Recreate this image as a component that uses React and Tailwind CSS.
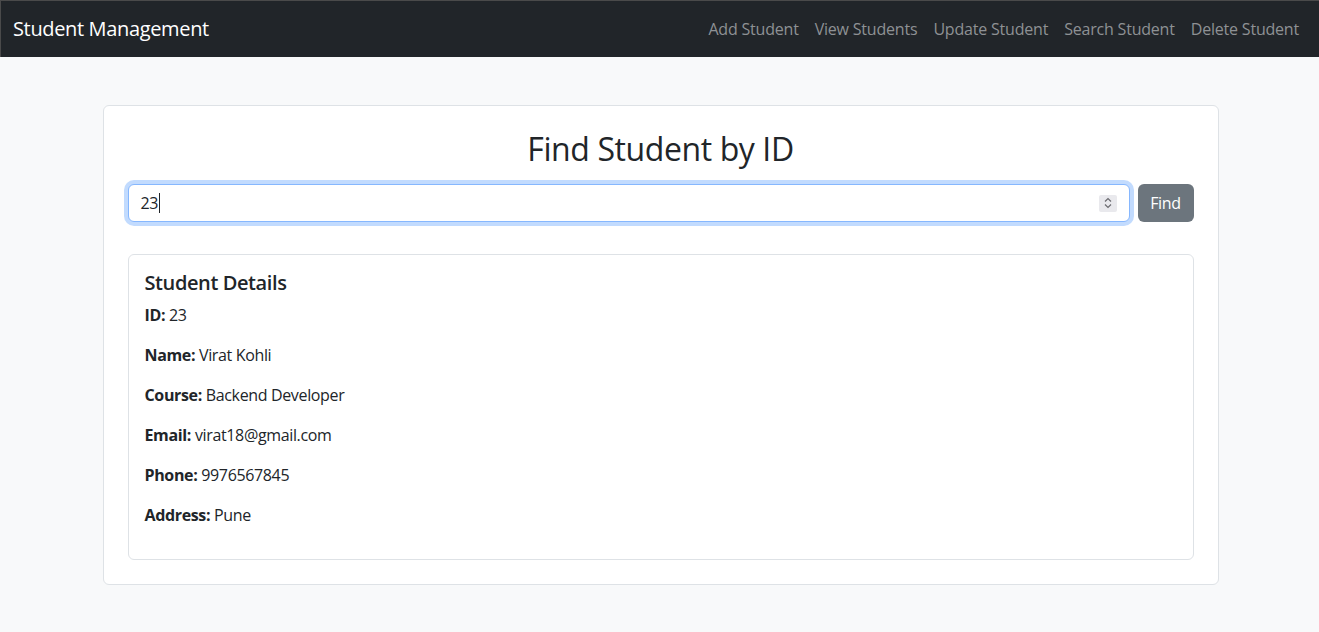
import React from 'react';

const navLinks = ['Add Student', 'View Students', 'Update Student', 'Search Student', 'Delete Student'];

const student = [
  ['ID', '23'],
  ['Name', 'Virat Kohli'],
  ['Course', 'Backend Developer'],
  ['Email', 'virat18@gmail.com'],
  ['Phone', '9976567845'],
  ['Address', 'Pune'],
];

const Spinner = () => (
  <div className="w-[18px] h-[17px] bg-[#e9e9ed] rounded-[2px] flex flex-col items-center justify-center">
    <svg width="10" height="14" viewBox="0 0 10 14" fill="none" stroke="#6b6b70" strokeWidth="1.2">
      <path d="M2 5.5 L5 2.5 L8 5.5" />
      <path d="M2 8.5 L5 11.5 L8 8.5" />
    </svg>
  </div>
);

const App = () => {
  return (
    <div className="min-h-[632px] bg-[#f8f9fa] text-[#212529] font-['Open_Sans',sans-serif]">
      <nav className="h-[57px] bg-[#212529] border-t border-l border-[#4a4a4a] flex items-center justify-between px-3">
        <span className="text-[20px] leading-[30px] text-white tracking-[-0.35px]">Student Management</span>
        <div className="flex items-center">
          {navLinks.map((link) => (
            <span key={link} className="px-2 text-[16px] leading-[24px] text-[#8e9194] tracking-[-0.2px]">
              {link}
            </span>
          ))}
        </div>
      </nav>

      <div className="mx-auto w-[1118px] pl-[2px] pt-[48px]">
        <div className="bg-white border border-[#dee2e6] rounded-[6px] p-6">
          <h2 className="text-center text-[32px] leading-[38px] font-normal tracking-[-0.4px] mb-4">Find Student by ID</h2>

          <div className="flex gap-2">
            <div className="flex-1 h-[38px] flex items-center px-3 bg-white border border-[#86b7fe] rounded-[6px] shadow-[0_0_0_4px_rgba(13,110,253,0.25)]">
              <span className="text-[16px] leading-[24px] tracking-[-0.3px]">23</span>
              <span className="w-px h-[20px] bg-[#212529] ml-[1px]" />
              <div className="flex-1" />
              <Spinner />
            </div>
            <button className="h-[38px] w-[56px] bg-[#6c757d] text-white text-[16px] rounded-[6px] tracking-[-0.3px]">Find</button>
          </div>

          <div className="mt-8 border border-[#dee2e6] rounded-[6px] p-4">
            <h5 className="text-[20px] leading-[24px] font-semibold tracking-[-0.4px] mb-2">Student Details</h5>
            {student.map(([label, value]) => (
              <p key={label} className="text-[16px] leading-[24px] mb-4 tracking-[-0.35px]">
                <strong className="font-bold">{label}:</strong> {value}
              </p>
            ))}
          </div>
        </div>
      </div>
    </div>
  );
};

export default App;
